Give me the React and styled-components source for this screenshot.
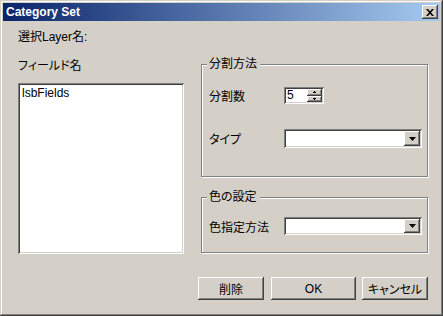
import React from 'react'
import styled, { createGlobalStyle } from 'styled-components'

const Global = createGlobalStyle`
  html, body { margin: 0; padding: 0; background: #d4d0c8; }
  * { box-sizing: border-box; }
  body {
    font-family: "Liberation Sans", "Noto Sans CJK JP", sans-serif;
    font-size: 12px;
    font-feature-settings: "palt";
    color: #000;
  }
`

const raised = `
  box-shadow: inset -1px -1px #404040, inset 1px 1px #ffffff,
    inset -2px -2px #808080, inset 2px 2px #d4d0c8;
`
const sunken = `
  box-shadow: inset 1px 1px #808080, inset -1px -1px #ffffff,
    inset 2px 2px #404040, inset -2px -2px #d4d0c8;
`

const Window = styled.div`
  width: 443px;
  height: 316px;
  padding: 3px;
  background: #d4d0c8;
  box-shadow: inset -1px -1px #404040, inset 1px 1px #d4d0c8,
    inset -2px -2px #808080, inset 2px 2px #ffffff;
  display: flex;
  flex-direction: column;
`

const TitleBar = styled.div`
  height: 18px;
  flex: none;
  display: flex;
  align-items: center;
  justify-content: space-between;
  padding: 0 2px 0 2px;
  background: linear-gradient(to right, #0a246a, #a6caf0);
  color: #fff;
  font-family: "Liberation Sans", sans-serif;
  font-weight: bold;
  font-size: 12px;
`

const CloseBtn = styled.div`
  width: 16px;
  height: 14px;
  background: #d4d0c8;
  ${raised}
  display: flex;
  align-items: center;
  justify-content: center;
`

const Body = styled.div`
  flex: 1;
  display: flex;
  flex-direction: column;
  padding: 9px 12px 0 15px;
`

const Text = styled.div`
  height: 15px;
  line-height: 15px;
  white-space: nowrap;
`

const Columns = styled.div`
  display: flex;
  margin-top: 14px;
  gap: 17px;
`

const LeftCol = styled.div`
  width: 166px;
  display: flex;
  flex-direction: column;
`

const RightCol = styled.div`
  width: 227px;
  display: flex;
  flex-direction: column;
  padding-top: 5px;
`

const ListBox = styled.div`
  margin-top: 9px;
  height: 171px;
  background: #fff;
  ${sunken}
  padding: 3px 4px;
  line-height: 14px;
`

const Group = styled.div`
  position: relative;
  height: ${p => p.$h}px;
  margin-top: ${p => p.$mt || 0}px;
  border: 1px solid #808080;
  box-shadow: inset 1px 1px #fff, 1px 1px #fff;
  padding: ${p => p.$pt}px 5px 0 7px;
  display: flex;
  flex-direction: column;
`

const Legend = styled.span`
  position: absolute;
  top: -8px;
  left: 5px;
  padding: 0 3px 0 2px;
  background: #d4d0c8;
  line-height: 15px;
`

const Row = styled.div`
  display: flex;
  align-items: center;
  height: ${p => p.$h}px;
  margin-top: ${p => p.$mt || 0}px;
`

const Label = styled.div`
  width: 75px;
  flex: none;
  white-space: nowrap;
`

const Field = styled.div`
  width: ${p => p.$w}px;
  height: 100%;
  background: #fff;
  ${sunken}
  padding: 2px;
  display: flex;
  align-items: center;
  justify-content: space-between;
`

const FieldText = styled.span`
  padding-left: 1px;
  line-height: 13px;
`

const SpinCol = styled.div`
  width: 15px;
  height: 100%;
  display: flex;
  flex-direction: column;
`

const SpinBtn = styled.div`
  flex: 1;
  background: #d4d0c8;
  ${raised}
  display: flex;
  align-items: center;
  justify-content: center;
`

const DropBtn = styled.div`
  width: 16px;
  height: 100%;
  background: #d4d0c8;
  ${raised}
  display: flex;
  align-items: center;
  justify-content: center;
`

const ButtonRow = styled.div`
  display: flex;
  justify-content: flex-end;
  margin-top: 23px;
  padding-right: 0;
`

const Button = styled.div`
  width: ${p => p.$w}px;
  height: 23px;
  margin-left: ${p => p.$ml}px;
  background: #d4d0c8;
  ${raised}
  display: flex;
  align-items: center;
  justify-content: center;
  white-space: nowrap;
`

const Arrow = () => (
  <svg width="7" height="4" viewBox="0 0 7 4">
    <path d="M0 0h7L3.5 4z" fill="#000" />
  </svg>
)

const Tiny = ({ up }) => (
  <svg width="3" height="2" viewBox="0 0 3 2">
    <path d={up ? 'M1 0h1v1H1zM0 1h3v1H0z' : 'M0 0h3v1H0zM1 1h1v1H1z'} fill="#000" />
  </svg>
)

export default function App() {
  return (
    <>
      <Global />
      <Window>
        <TitleBar>
          <span style={{ paddingLeft: 1 }}>Category Set</span>
          <CloseBtn>
            <svg width="8" height="7" viewBox="0 0 8 7">
              <path d="M0 0h2l2 2.2L6 0h2L5 3.5 8 7H6L4 4.8 2 7H0l3-3.5z" fill="#000" />
            </svg>
          </CloseBtn>
        </TitleBar>
        <Body>
          <Text>選択Layer名:</Text>
          <Columns>
            <LeftCol>
              <Text>フィールド名</Text>
              <ListBox>lsbFields</ListBox>
            </LeftCol>
            <RightCol>
              <Group $h={113} $pt={22}>
                <Legend>分割方法</Legend>
                <Row $h={17}>
                  <Label>分割数</Label>
                  <Field $w={40}>
                    <FieldText>5</FieldText>
                    <SpinCol>
                      <SpinBtn><Tiny up /></SpinBtn>
                      <SpinBtn><Tiny /></SpinBtn>
                    </SpinCol>
                  </Field>
                </Row>
                <Row $h={19} $mt={25}>
                  <Label>タイプ</Label>
                  <Field $w={138}>
                    <span />
                    <DropBtn><Arrow /></DropBtn>
                  </Field>
                </Row>
              </Group>
              <Group $h={56} $mt={20} $pt={19}>
                <Legend>色の設定</Legend>
                <Row $h={18}>
                  <Label>色指定方法</Label>
                  <Field $w={138}>
                    <span />
                    <DropBtn><Arrow /></DropBtn>
                  </Field>
                </Row>
              </Group>
            </RightCol>
          </Columns>
          <ButtonRow>
            <Button $w={66} $ml={0}>削除</Button>
            <Button $w={85} $ml={7}>OK</Button>
            <Button $w={66} $ml={6}>キャンセル</Button>
          </ButtonRow>
        </Body>
      </Window>
    </>
  )
}
